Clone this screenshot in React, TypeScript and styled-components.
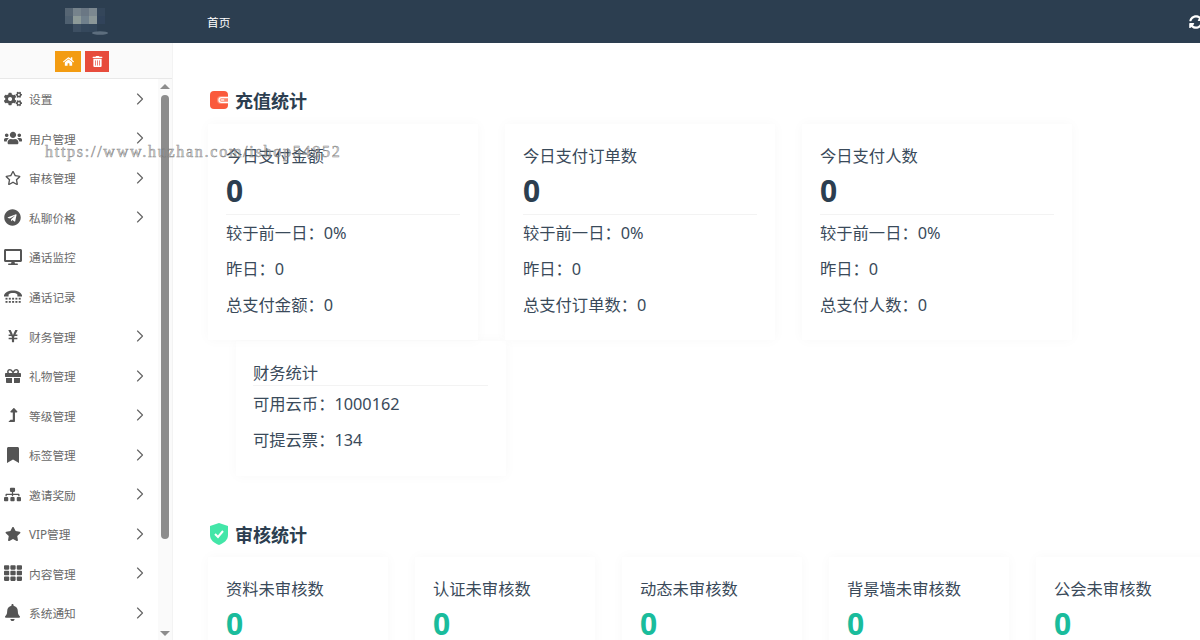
import React from "react";
import styled, { createGlobalStyle } from "styled-components";
import {
  FaCogs, FaUsers, FaRegStar, FaTelegram, FaDesktop, FaYenSign, FaGift,
  FaLevelUpAlt, FaBookmark, FaSitemap, FaStar, FaTh, FaBell, FaHome, FaTrashAlt, FaSyncAlt,
} from "react-icons/fa";
import { ChevronRight } from "lucide-react";

const Global = createGlobalStyle`
  html, body { margin: 0; padding: 0; height: 640px; overflow: hidden; background: #fff; }
  body { font-family: "Noto Sans", "Noto Sans CJK SC", sans-serif; color: #2c3e50; }
  * { box-sizing: border-box; }
`;

const Page = styled.div`
  position: relative;
  width: 1200px;
  height: 640px;
  overflow: hidden;
  display: flex;
  flex-direction: column;
`;

const Header = styled.header`
  height: 43px;
  flex: none;
  background: #2c3e50;
  display: flex;
  align-items: center;
  overflow: hidden;
`;

const LogoSlot = styled.div`
  width: 207px;
  flex: none;
  padding-left: 65px;
  display: flex;
  align-items: center;
`;

const HeaderLink = styled.span`
  color: #fff;
  font-size: 11.7px;
  flex: 1;
`;

const Refresh = styled.span`
  display: flex;
  margin-right: -3px;
  color: #fff;
  font-size: 14px;
`;

const Body = styled.div`
  flex: 1;
  min-height: 0;
  display: flex;
`;

const Sidebar = styled.aside`
  width: 173px;
  flex: none;
  display: flex;
  flex-direction: column;
  border-right: 1px solid #f3f3f3;
`;

const QuickBar = styled.div`
  height: 36px;
  flex: none;
  background: #fafafa;
  border-bottom: 1px solid #e8e8e8;
  display: flex;
  align-items: flex-start;
  gap: 4px;
  padding: 8px 0 0 55px;
`;

const QuickButton = styled.span<{ $bg: string; $w: number }>`
  width: ${(p) => p.$w}px;
  height: 21px;
  background: ${(p) => p.$bg};
  color: #fff;
  font-size: 11px;
  display: flex;
  align-items: center;
  justify-content: center;
`;

const SideScroll = styled.div`
  flex: 1;
  min-height: 0;
  display: flex;
`;

const Menu = styled.nav`
  width: 158px;
  flex: none;
  overflow: hidden;
`;

const MenuRow = styled.div`
  height: 39.55px;
  display: flex;
  align-items: center;
  color: #6a6a6a;
  font-size: 11.7px;
`;

const MenuIcon = styled.span<{ $size: number }>`
  width: 25px;
  margin-right: 4px;
  flex: none;
  color: #555;
  font-size: ${(p) => p.$size}px;
  display: flex;
  align-items: center;
  justify-content: center;
`;

const MenuLabel = styled.span`
  flex: 1;
`;

const Chevron = styled.span`
  width: 20px;
  margin-right: 8px;
  color: #666;
  display: flex;
`;

const Track = styled.div`
  flex: 1;
  background: #fafafa;
  display: flex;
  flex-direction: column;
  align-items: center;
`;

const ArrowUp = styled.i`
  margin: 5px 0 0 -1px;
  width: 0;
  height: 0;
  border-left: 5px solid transparent;
  border-right: 5px solid transparent;
  border-bottom: 5px solid #8c8c8c;
`;

const ArrowDown = styled.i`
  margin: auto 0 4px -1px;
  width: 0;
  height: 0;
  border-left: 5px solid transparent;
  border-right: 5px solid transparent;
  border-top: 5px solid #8c8c8c;
`;

const Thumb = styled.div`
  width: 8px;
  height: 444px;
  margin: 6px 0 0 -1px;
  border-radius: 4px;
  background: #8c8c8c;
`;

const Main = styled.main`
  flex: 1;
  min-width: 0;
  overflow: hidden;
  padding: 45px 0 0 35px;
`;

const SectionHead = styled.div`
  height: 24px;
  display: flex;
  align-items: center;
  gap: 7px;
  padding-left: 2px;
  font-size: 18px;
  font-weight: 700;
  color: #2c3e50;
`;

const AuditHead = styled(SectionHead)`
  margin-top: 46px;
`;

const CardRow = styled.div<{ $top: number }>`
  display: flex;
  gap: 27px;
  width: 1100px;
  margin-top: ${(p) => p.$top}px;
`;

const Card = styled.section<{ $w: number }>`
  width: ${(p) => p.$w}px;
  flex: none;
  padding: 20px 18px 17px;
  background: #fff;
  box-shadow: 0 0 12px rgba(0, 0, 0, 0.03);
`;

const FinanceCard = styled(Card)`
  margin: 1px 0 0 28px;
  padding: 20px 18px 18px 17px;
  height: 135px;
`;

const CardTitle = styled.div`
  font-size: 16.3px;
  line-height: 24px;
  color: #3a4a5a;
`;

const FinanceTitle = styled(CardTitle)`
  height: 25px;
  border-bottom: 1px solid #f3f3f3;
`;

const BigNum = styled.div<{ $c: string }>`
  font-size: 30px;
  font-weight: 700;
  line-height: 46px;
  color: ${(p) => p.$c};
`;

const Divider = styled.div`
  height: 1px;
  background: #f3f3f3;
`;

const Line = styled.div`
  font-size: 16.3px;
  height: 36px;
  line-height: 36px;
  color: #3a4a5a;
`;

const Watermark = styled.div`
  position: absolute;
  left: 45px;
  top: 142px;
  font-family: "Liberation Serif", serif;
  font-size: 16px;
  letter-spacing: 1.74px;
  line-height: 20px;
  white-space: nowrap;
  color: rgba(190, 190, 190, 0.55);
  -webkit-text-stroke: 0.5px rgba(110, 110, 110, 0.8);
  pointer-events: none;
`;

function TtyIcon() {
  return (
    <svg width="18" height="13" viewBox="0 0 18 13" fill="#555">
      <path d="M0 5.2C1 2 4.6.4 9 .4s8 1.6 9 4.8v1.2h-4.6V4.6C12.4 3.4 10.8 3 9 3s-3.4.4-4.4 1.6v1.8H0z" />
      {[1.5, 4.8, 8.1, 11.4, 14.7].map((x) => (
        <React.Fragment key={x}>
          <rect x={x} y="7.8" width="2" height="1.8" />
          <rect x={x} y="11" width="2" height="1.8" />
        </React.Fragment>
      ))}
    </svg>
  );
}

const menu: [string, React.ReactNode, number, boolean][] = [
  ["设置", <FaCogs />, 18, true],
  ["用户管理", <FaUsers />, 18, true],
  ["审核管理", <FaRegStar />, 16, true],
  ["私聊价格", <FaTelegram />, 17, true],
  ["通话监控", <FaDesktop />, 18, false],
  ["通话记录", <TtyIcon />, 18, false],
  ["财务管理", <FaYenSign />, 14, true],
  ["礼物管理", <FaGift />, 16, true],
  ["等级管理", <FaLevelUpAlt />, 14, true],
  ["标签管理", <FaBookmark />, 16, true],
  ["邀请奖励", <FaSitemap />, 17, true],
  ["VIP管理", <FaStar />, 16, true],
  ["内容管理", <FaTh />, 18, true],
  ["系统通知", <FaBell />, 17, true],
];

const pay = [
  ["今日支付金额", "总支付金额"],
  ["今日支付订单数", "总支付订单数"],
  ["今日支付人数", "总支付人数"],
];

const audit = ["资料未审核数", "认证未审核数", "动态未审核数", "背景墙未审核数", "公会未审核数"];

function Logo() {
  const cells: [number, number, string][] = [
    [0, 0, "#566573"], [1, 0, "#76838c"], [2, 0, "#6a7784"], [3, 0, "#7c8890"], [4, 0, "#34465a"],
    [0, 1, "#4f6070"], [1, 1, "#8d9a98"], [2, 1, "#70808c"], [3, 1, "#8b9798"], [4, 1, "#31435a"],
    [1, 2, "#3d4f62"], [2, 2, "#35485c"], [3, 2, "#34475b"],
  ];
  return (
    <svg width="44" height="28" viewBox="0 0 44 28">
      {cells.map(([x, y, c]) => (
        <rect key={`${x}-${y}`} x={x * 8} y={y * 8} width="8" height="8" fill={c} />
      ))}
      <ellipse cx="35" cy="25" rx="8" ry="1.8" fill="#5d6e7e" />
    </svg>
  );
}

function WalletIcon() {
  return (
    <svg width="18" height="18" viewBox="0 0 18 18">
      <rect width="18" height="18" rx="4" fill="#fa5a3c" />
      <path d="M18 5H11a4 4 0 0 0 0 8h7z" fill="#ff8a70" />
      <path d="M18 6.6h-6.6a2.4 2.4 0 0 0 0 4.8H18" fill="none" stroke="#fff" strokeWidth="1.3" />
      <rect x="10.6" y="8.4" width="3.6" height="1.2" fill="#fff" />
    </svg>
  );
}

function ShieldIcon() {
  return (
    <svg width="18" height="22" viewBox="0 0 18 22">
      <path d="M9 0l9 3v9c0 5-4 8-9 10-5-2-9-5-9-10V3z" fill="#43e6a8" />
      <path d="M5 11l3 3 5-6" fill="none" stroke="#fff" strokeWidth="2" />
    </svg>
  );
}

export default function App() {
  return (
    <Page>
      <Global />
      <Header>
        <LogoSlot><Logo /></LogoSlot>
        <HeaderLink>首页</HeaderLink>
        <Refresh><FaSyncAlt /></Refresh>
      </Header>
      <Body>
        <Sidebar>
          <QuickBar>
            <QuickButton $bg="#f39c12" $w={26}><FaHome /></QuickButton>
            <QuickButton $bg="#e74c3c" $w={24}><FaTrashAlt /></QuickButton>
          </QuickBar>
          <SideScroll>
            <Menu>
              {menu.map(([label, icon, size, arrow]) => (
                <MenuRow key={label}>
                  <MenuIcon $size={size}>{icon}</MenuIcon>
                  <MenuLabel>{label}</MenuLabel>
                  {arrow && <Chevron><ChevronRight size={20} strokeWidth={1.4} /></Chevron>}
                </MenuRow>
              ))}
            </Menu>
            <Track>
              <ArrowUp />
              <Thumb />
              <ArrowDown />
            </Track>
          </SideScroll>
        </Sidebar>
        <Main>
          <SectionHead><WalletIcon />充值统计</SectionHead>
          <CardRow $top={12}>
            {pay.map(([title, total]) => (
              <Card $w={270} key={title}>
                <CardTitle>{title}</CardTitle>
                <BigNum $c="#2c3e50">0</BigNum>
                <Divider />
                <Line>较于前一日：0%</Line>
                <Line>昨日：0</Line>
                <Line>{total}：0</Line>
              </Card>
            ))}
          </CardRow>
          <FinanceCard $w={270}>
            <FinanceTitle>财务统计</FinanceTitle>
            <Line>可用云币：1000162</Line>
            <Line>可提云票：134</Line>
          </FinanceCard>
          <AuditHead><ShieldIcon />审核统计</AuditHead>
          <CardRow $top={11}>
            {audit.map((t) => (
              <Card $w={180} key={t}>
                <CardTitle>{t}</CardTitle>
                <BigNum $c="#1abc9c">0</BigNum>
              </Card>
            ))}
          </CardRow>
        </Main>
      </Body>
      <Watermark>https://www.huzhan.com/ishop54852</Watermark>
    </Page>
  );
}
